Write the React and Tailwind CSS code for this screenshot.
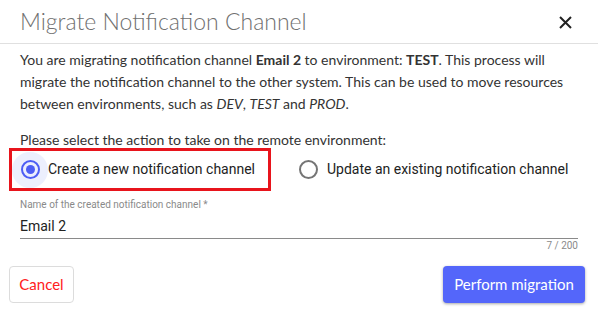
export default function App() {
  const body = { fontFamily: 'Lato, "Open Sans", sans-serif' }
  const sans = { fontFamily: 'Roboto, "Liberation Sans", Arial, sans-serif' }

  return (
    <div className="w-[598px] h-[311px] bg-white overflow-hidden" style={body}>
      <div className="flex items-center justify-between h-[44px] pl-[20px] pr-[26px] border-b border-[#e0e0e0]">
        <h1 className="text-[23px] font-light text-[#707070]">Migrate Notification Channel</h1>
        <svg width="13" height="13" viewBox="0 0 13 13" className="mt-[1px]">
          <path d="M1 1L12 12M12 1L1 12" stroke="#222" strokeWidth="2" />
        </svg>
      </div>

      <div className="px-[20px] pt-[5px] text-[14px] text-[#333]">
        <p className="leading-[22px]">
          You are migrating notification channel <b>Email 2</b> to environment: <b>TEST</b>. This process will
          migrate the notification channel to the other system. This can be used to move resources
          between environments, such as <i>DEV</i>, <i>TEST</i> and <i>PROD</i>.
        </p>
        <p className="mt-[17px] leading-[16px]">Please select the action to take on the remote environment:</p>
      </div>

      <div className="flex items-center pl-[9px]" style={sans}>
        <div className="flex items-center w-[262px] h-[43px] border-[3px] border-[#e8141c]">
          <div className="w-[36px] h-[36px] rounded-full bg-[#eceffd] flex items-center justify-center shrink-0">
            <div className="w-[19px] h-[19px] rounded-full border-2 border-[#4d5ef4] flex items-center justify-center">
              <div className="w-[9px] h-[9px] rounded-full bg-[#4d5ef4]" />
            </div>
          </div>
          <span className="text-[14px] text-[#222] whitespace-nowrap">Create a new notification channel</span>
        </div>
        <div className="flex items-center ml-[28px]">
          <div className="w-[19px] h-[19px] rounded-full border-2 border-[#757575] shrink-0" />
          <span className="ml-[9px] text-[14px] text-[#222] whitespace-nowrap">Update an existing notification channel</span>
        </div>
      </div>

      <div className="px-[20px] mt-[8px]" style={sans}>
        <div className="text-[10px] text-[#8a8a8a] leading-[12px]">Name of the created notification channel *</div>
        <div className="text-[14px] text-[#222] pt-[6px] pb-[3px] border-b border-[#8a8a8a] leading-[18px]">Email 2</div>
        <div className="text-right text-[10px] text-[#8a8a8a] mt-[1px] leading-[12px]">7 / 200</div>
      </div>

      <div className="flex items-center justify-between pl-[9px] pr-[13px] mt-[14px]">
        <button className="w-[65px] h-[37px] rounded-[4px] border border-[#dcdcdc] bg-white text-[15px] text-[#ff2020]">
          Cancel
        </button>
        <button className="w-[142px] h-[37px] rounded-[4px] bg-[#5466fa] text-white text-[15px] shadow-[0_1px_3px_rgba(0,0,0,0.35)]">
          Perform migration
        </button>
      </div>
    </div>
  )
}
